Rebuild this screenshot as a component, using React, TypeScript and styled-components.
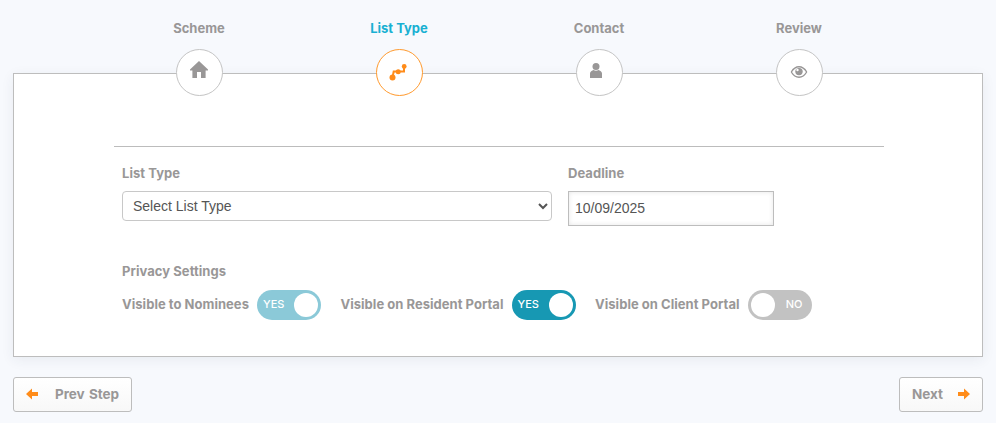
import React from "react";
import styled, { createGlobalStyle } from "styled-components";

const GlobalStyle = createGlobalStyle`
  html, body {
    margin: 0;
    padding: 0;
    background: #f7f9fd;
  }
  * {
    box-sizing: border-box;
  }
`;

const Page = styled.div`
  width: 996px;
  height: 423px;
  padding: 0 13px;
  overflow: hidden;
  font-family: "Inter", "Liberation Sans", sans-serif;
  color: #999797;
`;

const Steps = styled.div`
  display: flex;
  justify-content: center;
  padding: 20px 0 0 2px;
  height: 73px;
  position: relative;
  z-index: 1;
`;

const Step = styled.div`
  width: 200px;
  display: flex;
  flex-direction: column;
  align-items: center;
`;

const StepLabel = styled.div<{ $active?: boolean }>`
  font-size: 13px;
  font-weight: 700;
  line-height: 16px;
  color: ${({ $active }) => ($active ? "#19b0d2" : "#999797")};
`;

const StepCircle = styled.div<{ $active?: boolean }>`
  flex: none;
  width: 47px;
  height: 47px;
  margin-top: 13px;
  border-radius: 50%;
  background: #fff;
  border: 1px solid ${({ $active }) => ($active ? "#ff9a2e" : "#c4c4c4")};
  display: flex;
  align-items: center;
  justify-content: center;
  color: ${({ $active }) => ($active ? "#ff8c1a" : "#999797")};
`;

const StepGlyph = styled.span<{ $dx: number; $dy: number }>`
  display: flex;
  transform: translate(${({ $dx }) => $dx}px, ${({ $dy }) => $dy}px);
`;

const Panel = styled.div`
  height: 284px;
  background: #fff;
  border: 1px solid #bdbdbd;
  box-shadow: 0 3px 12px rgba(40, 50, 90, 0.07);
  padding: 72px 98px 0 100px;
`;

const Divider = styled.hr`
  margin: 0;
  border: 0;
  border-top: 1px solid #bcbcbc;
`;

const Form = styled.div`
  padding: 18px 8px 0;
`;

const FieldRow = styled.div`
  display: flex;
  gap: 16px;
  align-items: flex-start;
`;

const Field = styled.div<{ $width: number }>`
  width: ${({ $width }) => $width}px;
`;

const Label = styled.div`
  font-size: 13px;
  font-weight: 700;
  line-height: 16px;
  letter-spacing: 0.05px;
  margin-bottom: 10px;
`;

const Select = styled.select`
  display: block;
  width: 100%;
  height: 30px;
  padding: 0 6px;
  border: 1px solid #c8c8c8;
  border-radius: 4px;
  background: #fff;
  color: #555;
  font-family: "Liberation Sans", Arial, sans-serif;
  font-size: 14px;
`;

const DateInput = styled.input`
  display: block;
  width: 100%;
  height: 35px;
  padding: 0 6px 1px;
  border: 1px solid #bdbdbd;
  background: #fff;
  box-shadow: inset 0 0 5px rgba(0, 0, 0, 0.1);
  color: #555;
  font-family: "Liberation Sans", Arial, sans-serif;
  font-size: 14px;
  outline: none;
`;

const Privacy = styled.div`
  margin-top: 37px;
`;

const PrivacyTitle = styled(Label)`
  margin-bottom: 11px;
`;

const ToggleRow = styled.div`
  display: flex;
  align-items: center;
`;

const ToggleLabel = styled.span`
  font-size: 13px;
  font-weight: 700;
  letter-spacing: 0.03px;
  white-space: nowrap;
  margin-right: 8px;
  padding-bottom: 2px;
`;

const ToggleItem = styled.div`
  display: flex;
  align-items: center;
  margin-right: 19.5px;
`;

const Toggle = styled.div<{ $bg: string; $on: boolean }>`
  width: 64px;
  height: 30px;
  border-radius: 15px;
  background: ${({ $bg }) => $bg};
  display: flex;
  flex-direction: ${({ $on }) => ($on ? "row" : "row-reverse")};
  align-items: center;
  justify-content: space-between;
  padding: 3px;
  color: #fff;
  font-size: 11px;
  font-weight: 500;
`;

const ToggleText = styled.span<{ $on: boolean }>`
  padding: ${({ $on }) => ($on ? "0 0 2px 3px" : "0 6px 2px 0")};
`;

const Knob = styled.span`
  width: 24px;
  height: 24px;
  border-radius: 50%;
  background: #fff;
`;

const Footer = styled.div`
  display: flex;
  justify-content: space-between;
  padding-top: 20px;
`;

const NavButton = styled.button<{ $width: number; $gap: number }>`
  width: ${({ $width }) => $width}px;
  height: 35px;
  display: flex;
  align-items: center;
  justify-content: center;
  gap: ${({ $gap }) => $gap}px;
  border: 1px solid #bdbdbd;
  border-radius: 3px;
  background: linear-gradient(#ffffff, #f8f8f8);
  color: #999797;
  font-family: "Inter", "Liberation Sans", sans-serif;
  font-size: 13.5px;
  font-weight: 700;
  word-spacing: 1px;
  padding: 0 0 2px;
`;

const HomeIcon = () => (
  <svg width="18" height="17" viewBox="0 0 18 17" fill="currentColor">
    <path d="M9 0 L18 8.6 V9.4 H15.6 V17 H11 V11 H7 V17 H2.4 V9.4 H0 V8.6 Z" />
  </svg>
);

const RouteIcon = () => (
  <svg width="20" height="18" viewBox="0 0 20 18" fill="none">
    <path d="M3.5 13.5 L4.7 7.5 H15 V2.5" stroke="currentColor" strokeWidth="2" />
    <circle cx="3.5" cy="13.5" r="3" fill="currentColor" />
    <circle cx="9.2" cy="7.8" r="2.5" fill="currentColor" />
    <circle cx="15.2" cy="2.4" r="2.4" fill="currentColor" />
  </svg>
);

const UserIcon = () => (
  <svg width="12" height="15" viewBox="0 0 12 15" fill="currentColor">
    <circle cx="6" cy="3.6" r="3.5" />
    <path d="M0 15 V10.5 C0 8.5 2 7.5 3.6 7 C4.6 8 7.4 8 8.4 7 C10 7.5 12 8.5 12 10.5 V15 Z" />
  </svg>
);

const EyeIcon = () => (
  <svg width="17" height="12" viewBox="0 0 17 12" fill="none">
    <path
      d="M0.8 6 C3 2.4 5.6 0.8 8.5 0.8 C11.4 0.8 14 2.4 16.2 6 C14 9.6 11.4 11.2 8.5 11.2 C5.6 11.2 3 9.6 0.8 6 Z"
      stroke="currentColor"
      strokeWidth="1.4"
    />
    <circle cx="8.5" cy="5.6" r="3.7" fill="currentColor" />
    <circle cx="7" cy="4" r="1.2" fill="#fff" />
  </svg>
);

const ArrowIcon = ({ left }: { left?: boolean }) => (
  <svg
    width="12"
    height="12"
    viewBox="0 0 12 12"
    fill="#ff8c1a"
    style={left ? { transform: "scaleX(-1)" } : undefined}
  >
    <path d="M0 4 H6 V0.5 L12 6 L6 11.5 V8 H0 Z" />
  </svg>
);

const steps = [
  { label: "Scheme", icon: <HomeIcon />, dx: 0, dy: -3 },
  { label: "List Type", icon: <RouteIcon />, active: true, dx: 0, dy: 0 },
  { label: "Contact", icon: <UserIcon />, dx: -3, dy: -2 },
  { label: "Review", icon: <EyeIcon />, dx: -0.5, dy: -1 },
];

const toggles = [
  { label: "Visible to Nominees", on: true, bg: "#8bc9d8", text: "YES" },
  { label: "Visible on Resident Portal", on: true, bg: "#1798b3", text: "YES" },
  { label: "Visible on Client Portal", on: false, bg: "#c2c2c2", text: "NO" },
];

export default function App() {
  return (
    <Page>
      <GlobalStyle />
      <Steps>
        {steps.map((step) => (
          <Step key={step.label}>
            <StepLabel $active={step.active}>{step.label}</StepLabel>
            <StepCircle $active={step.active}>
              <StepGlyph $dx={step.dx} $dy={step.dy}>
                {step.icon}
              </StepGlyph>
            </StepCircle>
          </Step>
        ))}
      </Steps>
      <Panel>
        <Divider />
        <Form>
          <FieldRow>
            <Field $width={430}>
              <Label>List Type</Label>
              <Select defaultValue="">
                <option value="">Select List Type</option>
              </Select>
            </Field>
            <Field $width={206}>
              <Label>Deadline</Label>
              <DateInput defaultValue="10/09/2025" />
            </Field>
          </FieldRow>
          <Privacy>
            <PrivacyTitle>Privacy Settings</PrivacyTitle>
            <ToggleRow>
              {toggles.map((t) => (
                <ToggleItem key={t.label}>
                  <ToggleLabel>{t.label}</ToggleLabel>
                  <Toggle $bg={t.bg} $on={t.on}>
                    <ToggleText $on={t.on}>{t.text}</ToggleText>
                    <Knob />
                  </Toggle>
                </ToggleItem>
              ))}
            </ToggleRow>
          </Privacy>
        </Form>
      </Panel>
      <Footer>
        <NavButton $width={119} $gap={17}>
          <ArrowIcon left />
          Prev Step
        </NavButton>
        <NavButton $width={84} $gap={15}>
          Next
          <ArrowIcon />
        </NavButton>
      </Footer>
    </Page>
  );
}
